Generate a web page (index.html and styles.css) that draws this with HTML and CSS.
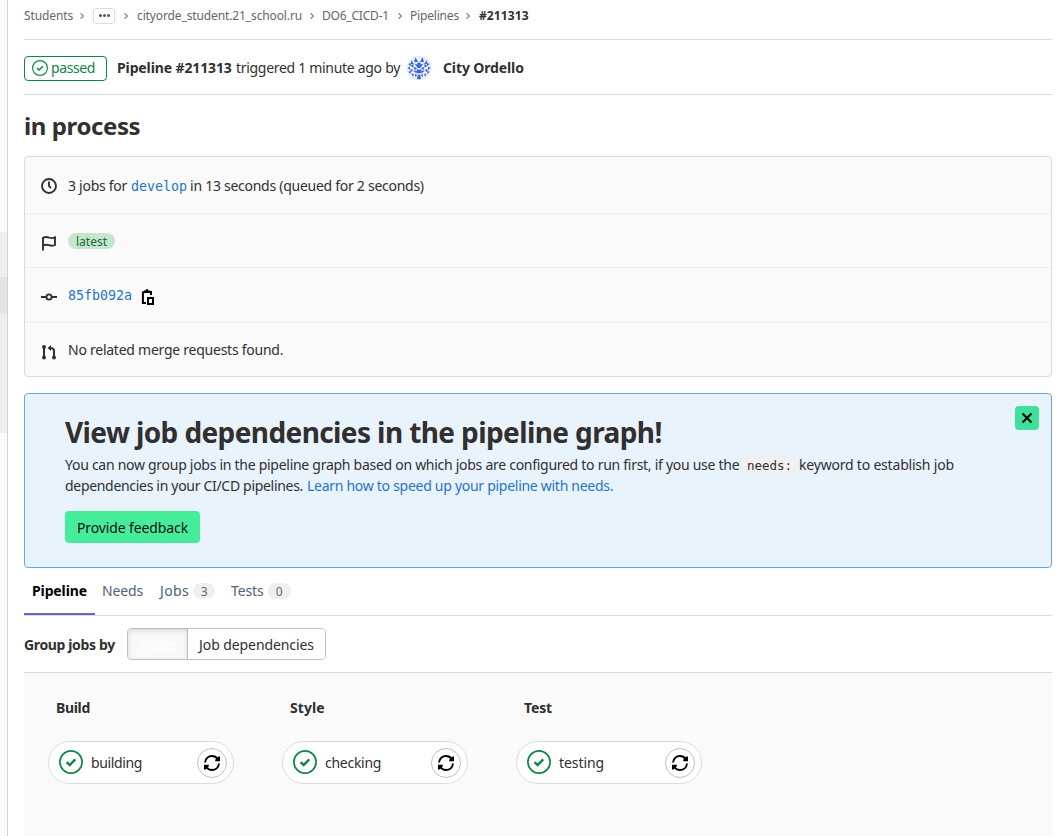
FILE: index.html
```html
<!DOCTYPE html>
<html lang="en">
<head>
<meta charset="utf-8">
<title>Pipeline #211313</title>
<link rel="stylesheet" href="styles.css">
</head>
<body>
<svg class="defs" width="0" height="0">
  <symbol id="chevron" viewBox="0 0 8 8"><path d="M2.5 1.2 5.4 4 2.5 6.8" fill="none" stroke="#888" stroke-width="1.2"/></symbol>
  <symbol id="success" viewBox="0 0 24 24"><circle cx="12" cy="12" r="11.1" fill="none" stroke="#108548" stroke-width="1.7"/><path d="M7.6 12.2 10.7 15 16.3 9.3" fill="none" stroke="#108548" stroke-width="2.4"/></symbol>
  <symbol id="retry" viewBox="0 0 16 16"><path d="M1 7.500C1.500 3.500 4.500 1 8 1c2.400 0 4.500 1.200 5.700 3M15 8.500C14.500 12.500 11.500 15 8 15c-2.400 0-4.500-1.200-5.700-3" fill="none" stroke="#000" stroke-width="2"/><path d="M16 1.500V6.200h-4.800V4.700L14.500 1.500zM0 14.500V9.800h4.800v1.500L1.500 14.500z"/></symbol>
</svg>
<div class="page">
  <aside class="rail"><div class="rail-group"><div class="rail-active"></div></div></aside>
  <main class="content">
    <nav class="crumbs">
      <a class="c-students">Students</a><svg><use href="#chevron"/></svg>
      <button class="more"><i></i><i></i><i></i></button><svg class="after-more"><use href="#chevron"/></svg>
      <a class="c-group">cityorde_student.21_school.ru</a><svg><use href="#chevron"/></svg>
      <a class="c-project">DO6_CICD-1</a><svg><use href="#chevron"/></svg>
      <a class="c-pipes">Pipelines</a><svg><use href="#chevron"/></svg>
      <b>#211313</b>
    </nav>
    <header class="status">
      <span class="badge"><svg width="16" height="16"><use href="#success"/></svg><span>passed</span></span>
      <b class="pipe-id">Pipeline #211313</b>
      <span class="trigger">triggered 1 minute ago by</span>
      <svg class="avatar" width="24" height="24" viewBox="0 0 24 24">
        <defs>
          <clipPath id="round"><circle cx="12" cy="12" r="11.300"/></clipPath>
          <g id="half">
            <path d="M8.500 1 11 6H7zM4 4l3 4H4zM1 8l3-1v3zM3.500 9.500l3-1.500v4zM0.500 12l2.500-1.500V14zM7.500 7.500l3 1v3zM7 11l3 1-2.500 2.500zM10.500 6.500H12V12h-1.500zM3.500 13l3 1-3 2.500zM1 16l2-1 1 3zM6.500 15l3-.5v3zM10 13l2 1v3.500l-2.500-1zM4.500 17.500l2.500.5-1 3zM8 18l2.500 1L8 21zM10.500 20l1.500-2v6l-2-1z"/>
          </g>
        </defs>
        <circle cx="12" cy="12" r="12" fill="#e0e0e0"/><circle cx="12" cy="12" r="11.300" fill="#f0f3fd"/>
        <g fill="#3565de" clip-path="url(#round)"><use href="#half"/><use href="#half" transform="translate(24 0) scale(-1 1)"/></g>
      </svg>
      <b class="user">City Ordello</b>
    </header>
    <h1>in process</h1>
    <section class="info">
      <div class="row r1">
        <svg width="16" height="16" viewBox="0 0 16 16" class="line"><circle cx="8" cy="8" r="7"/><path d="M8 3.500V8l2 2.200"/></svg>
        <span class="jobs-for">3 jobs for</span><code class="branch">develop</code><span class="duration">in 13 seconds (queued for 2 seconds)</span>
      </div>
      <div class="row r2">
        <svg width="16" height="16" viewBox="0 0 16 16" class="line flag"><path d="M2 15.500V2M2 3c3-1.800 4.500-1 6.500-.3 2 .6 3.500.7 5.500-.3v7.600c-2.500 1.200-4 .9-6 .2-2-.6-3.500-.9-6 .3"/></svg>
        <span class="latest">latest</span>
      </div>
      <div class="row r3">
        <svg width="16" height="16" viewBox="0 0 16 16" class="line low"><circle cx="8" cy="8" r="2.600"/><path d="M0 8h5M11 8h5"/></svg>
        <code class="sha">85fb092a</code>
        <svg class="copy" width="14" height="16" viewBox="0 0 14 16"><path d="M2 3h8v3M1.900 2.500V14H5" fill="none" stroke="#000" stroke-width="2"/><path d="M3 1.500h1.500a1.500 1.500 0 0 1 3 0H9V4H3z"/><path d="M7 9h5v6H7z" fill="none" stroke="#000" stroke-width="2"/></svg>
      </div>
      <div class="row r4">
        <svg width="16" height="16" viewBox="0 0 16 16" class="low"><path d="M3 3.500v9M13 12.500V7c0-2-1-3-3.500-3" fill="none" stroke="#303030" stroke-width="2"/><circle cx="3" cy="3" r="2"/><circle cx="3" cy="13.500" r="2"/><circle cx="13" cy="13.500" r="2"/><path d="M6.500 4 10 1v6z"/></svg>
        <span class="merge">No related merge requests found.</span>
      </div>
    </section>
    <section class="banner">
      <button class="close"><svg width="12" height="12" viewBox="0 0 12 12"><path d="M1.500 1.500l9 9M10.500 1.500l-9 9" stroke="#000" stroke-width="2"/></svg></button>
      <h2>View job dependencies in the pipeline graph!</h2>
      <p><span class="intro">You can now group jobs in the pipeline graph based on which jobs are configured to run first, if you use the</span><code>needs:</code><span class="kw">keyword to establish job</span></p>
      <p><span class="deps">dependencies in your CI/CD pipelines.</span><a>Learn how to speed up your pipeline with needs.</a></p>
      <button class="feedback">Provide feedback</button>
    </section>
    <nav class="tabs">
      <a class="tab active">Pipeline</a>
      <a class="tab needs">Needs</a>
      <a class="tab jobs">Jobs<span>3</span></a>
      <a class="tab tests">Tests<span>0</span></a>
    </nav>
    <div class="group">
      <b>Group jobs by</b>
      <div class="toggle"><button class="on">Stage</button><button class="off">Job dependencies</button></div>
    </div>
    <section class="graph">
      <div class="stage"><h3 class="s-build">Build</h3><div class="job"><svg width="24" height="24"><use href="#success"/></svg><span class="j-building">building</span><button><svg width="16" height="16"><use href="#retry"/></svg></button></div></div>
      <div class="stage"><h3 class="s-style">Style</h3><div class="job"><svg width="24" height="24"><use href="#success"/></svg><span class="j-checking">checking</span><button><svg width="16" height="16"><use href="#retry"/></svg></button></div></div>
      <div class="stage"><h3 class="s-test">Test</h3><div class="job"><svg width="24" height="24"><use href="#success"/></svg><span class="j-testing">testing</span><button><svg width="16" height="16"><use href="#retry"/></svg></button></div></div>
    </section>
  </main>
</div>
</body>
</html>
```
FILE: styles.css
```css
* { box-sizing: border-box; }
body { margin: 0; background: #fff; color: #303030; font: 14px/20px "Noto Sans", sans-serif; letter-spacing: -0.27px; white-space: nowrap; overflow: hidden; }
svg { display: block; flex: none; overflow: visible; }
button { font: inherit; letter-spacing: inherit; padding: 0; border: 0; }
h1, h2, h3, p { margin: 0; }
code { font-family: "DejaVu Sans Mono", monospace; }
.defs { position: absolute; }
.page { display: flex; height: 836px; }
.rail { width: 8px; padding-top: 232px; background: #fafafa; border-right: 1px solid #d4d4d4; flex: none; }
.rail-group { height: 201px; padding-top: 45px; background: #efefef; }
.rail-active { height: 37px; background: #e4e4e4; }
.content { width: 1044px; padding-left: 16px; display: flex; flex-direction: column; }

.crumbs { height: 40px; padding-bottom: 8px; display: flex; align-items: center; border-bottom: 1px solid #dbdbdb; font-size: 12px; letter-spacing: -0.12px; color: #666; }
.crumbs svg { width: 8px; height: 8px; margin: 0 6px 0 5px; }
.crumbs .after-more { margin: 0 7px; }
.c-students { width: 49px; }
.c-group { width: 166px; }
.c-project { width: 69px; letter-spacing: -0.21px; }
.c-pipes { width: 49px; letter-spacing: -0.18px; }
.crumbs b { color: #303030; letter-spacing: 0.12px; margin-left: 1px; }
.more { width: 22px; height: 16px; margin-left: 1px; background: #fff; border: 1px solid #dbdbdb; border-radius: 3px; display: flex; align-items: center; justify-content: center; gap: 1px; }
.more i { width: 3px; height: 3px; border-radius: 50%; background: #555; }

.status { height: 55px; padding-top: 2px; border-bottom: 1px solid #dbdbdb; display: flex; align-items: center; }
.badge { width: 83px; height: 25px; padding-left: 7px; display: flex; align-items: center; gap: 3px; border: 1px solid #108548; border-radius: 4px; color: #108548; letter-spacing: -0.4px; }
.pipe-id { width: 115px; margin-left: 10px; letter-spacing: -0.12px; }
.trigger { width: 164px; margin-left: 4px; letter-spacing: -0.3px; }
.avatar { margin-left: 7px; }
.user { margin-left: 12px; letter-spacing: -0.12px; }
h1 { height: 61px; padding-top: 15px; font-size: 24px; line-height: 32px; letter-spacing: -0.4px; }

.info { height: 221px; background: #fafafa; border: 1px solid #dbdbdb; border-radius: 4px; }
.row { height: 55px; padding-left: 16px; display: flex; align-items: center; border-bottom: 1px solid #eee; }
.r1 { height: 57px; padding-top: 2px; }
.r2 { height: 54px; }
.r4 { height: 53px; border: 0; }
.row > :nth-child(2) { margin-left: 11px; }
.line { fill: none; stroke: #303030; stroke-width: 1.900; }
.low { position: relative; top: 2px; }
.flag { position: relative; top: 2px; }
.r4 svg { fill: #303030; }
.jobs-for { width: 60px; }
.branch, .sha { color: #1f75cb; font-size: 13.300px; letter-spacing: 0; margin-left: 3px; padding-top: 1px; }
.duration { margin-left: 3px; }
.latest { width: 47px; height: 16px; line-height: 17px; border-radius: 8px; background: #c3e6cd; color: #24663b; font-size: 12px; letter-spacing: 0; text-align: center; }
.copy { margin-left: 9px; position: relative; top: 2px; }
.merge { letter-spacing: -0.25px; }

.banner { position: relative; height: 175px; margin-top: 16px; padding: 19px 40px; background: #e9f3fc; border: 1px solid #63a6e9; border-radius: 4px; }
.close { position: absolute; top: 12px; right: 12px; width: 24px; height: 24px; border-radius: 4px; background: #3fe19a; display: flex; align-items: center; justify-content: center; }
h2 { font-size: 28px; line-height: 38px; letter-spacing: -0.6px; height: 41px; }
.banner p { display: flex; align-items: center; height: 21px; }
.intro { width: 674px; letter-spacing: -0.277px; }
.banner code { width: 53px; height: 19px; margin: 0 3px 0 4px; line-height: 21px; text-align: center; background: #f0f0f0; border-radius: 4px; font-size: 12.500px; letter-spacing: 0; }
.kw { letter-spacing: -0.2px; }
.deps { width: 238px; margin-right: 4px; letter-spacing: -0.31px; }
.banner a { color: #1f75cb; letter-spacing: -0.28px; }
.feedback { display: block; width: 135px; height: 32px; margin-top: 15px; padding-top: 2px; border-radius: 4px; background: #45ed9b; color: #111; letter-spacing: -0.12px; }

.tabs { height: 48px; border-bottom: 1px solid #dbdbdb; display: flex; }
.tab { height: 47px; padding: 13px 8px 0; color: #525f78; display: flex; }
.tab.active { width: 71px; color: #000; font-weight: 700; letter-spacing: -0.12px; border-bottom: 2px solid #6666c4; }
.needs { width: 57px; padding-left: 7px; letter-spacing: -0.15px; }
.jobs { width: 71px; letter-spacing: 0.4px; }
.tests { letter-spacing: -0.1px; }
.tab span { width: 23px; height: 16px; margin: 2px 0 0 4px; line-height: 17px; text-align: center; letter-spacing: 0; border-radius: 8px; background: #efefef; color: #666; font-size: 12px; }
.group { height: 56px; display: flex; align-items: center; }
.group b { width: 103px; padding-top: 2px; letter-spacing: -0.36px; }
.toggle { width: 199px; height: 32px; display: flex; border: 1px solid #bfbfbf; border-radius: 4px; overflow: hidden; }
.toggle button { padding-top: 2px; color: #303030; background: #fff; letter-spacing: -0.09px; }
.toggle .on { width: 60px; color: #fff; background: #f9f9f9; border-right: 1px solid #bfbfbf; box-shadow: inset 0 2px 5px #0002; letter-spacing: -0.2px; }
.toggle .off { flex: 1; }

.graph { flex: 1; padding: 25px 24px; background: #fafafa; border-top: 1px solid #dbdbdb; display: flex; gap: 48px; }
.stage { width: 186px; }
h3 { font-size: 14px; line-height: 20px; margin: 0 0 23px 8px; }
.s-build { letter-spacing: -0.33px; }
.s-style { letter-spacing: 0.1px; }
.s-test { letter-spacing: -0.14px; }
.job { height: 43px; padding: 0 6px 0 10px; display: flex; align-items: center; background: #fff; border: 1px solid #dbdbdb; border-radius: 22px; }
.job > svg { margin-bottom: 1px; }
.job span { flex: 1; margin-left: 8px; }
.j-building { letter-spacing: -0.37px; }
.j-testing { letter-spacing: -0.08px; }
.job button { width: 30px; height: 30px; margin-top: 1px; border: 1px solid #bfbfbf; border-radius: 50%; background: #fff; display: flex; align-items: center; justify-content: center; }
```
